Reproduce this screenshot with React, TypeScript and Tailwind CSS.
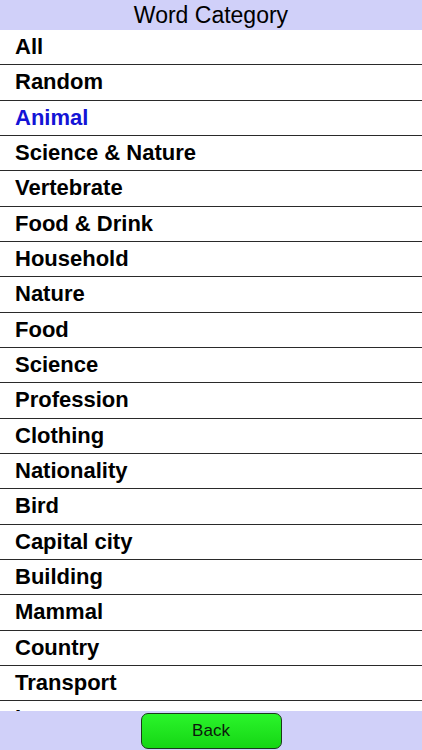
const categories = [
  "All",
  "Random",
  "Animal",
  "Science & Nature",
  "Vertebrate",
  "Food & Drink",
  "Household",
  "Nature",
  "Food",
  "Science",
  "Profession",
  "Clothing",
  "Nationality",
  "Bird",
  "Capital city",
  "Building",
  "Mammal",
  "Country",
  "Transport",
  "Insurance",
];

const selected = "Animal";

export default function App() {
  return (
    <div className="flex h-[750px] w-full flex-col overflow-hidden bg-white font-['Liberation_Sans',Arial,sans-serif]">
      {/* ── Header ── */}
      <div className="flex h-[30px] shrink-0 items-center justify-center bg-[#d0d0f9] text-[23px] leading-none text-black">
        Word Category
      </div>

      {/* ── Category list ── */}
      <div className="min-h-0 flex-1 overflow-hidden">
        {categories.map((name) => (
          <div
            key={name}
            className="flex h-[35.33px] items-center border-b border-[#2a2a2a] pl-[15px]"
          >
            <span
              className={
                name === selected
                  ? "text-[22px] font-bold leading-none text-[#1414d6]"
                  : "text-[22px] font-bold leading-none text-black"
              }
            >
              {name}
            </span>
          </div>
        ))}
      </div>

      {/* ── Footer ── */}
      <div className="flex h-[39px] shrink-0 items-center justify-center bg-[#d0d0f9]">
        <button className="flex h-[36px] w-[141px] items-center justify-center rounded-[7px] border border-[#1a3a1a] bg-gradient-to-b from-[#2af52a] to-[#14d614] text-[17px] leading-none text-[#0c180c]">
          Back
        </button>
      </div>
    </div>
  );
}
